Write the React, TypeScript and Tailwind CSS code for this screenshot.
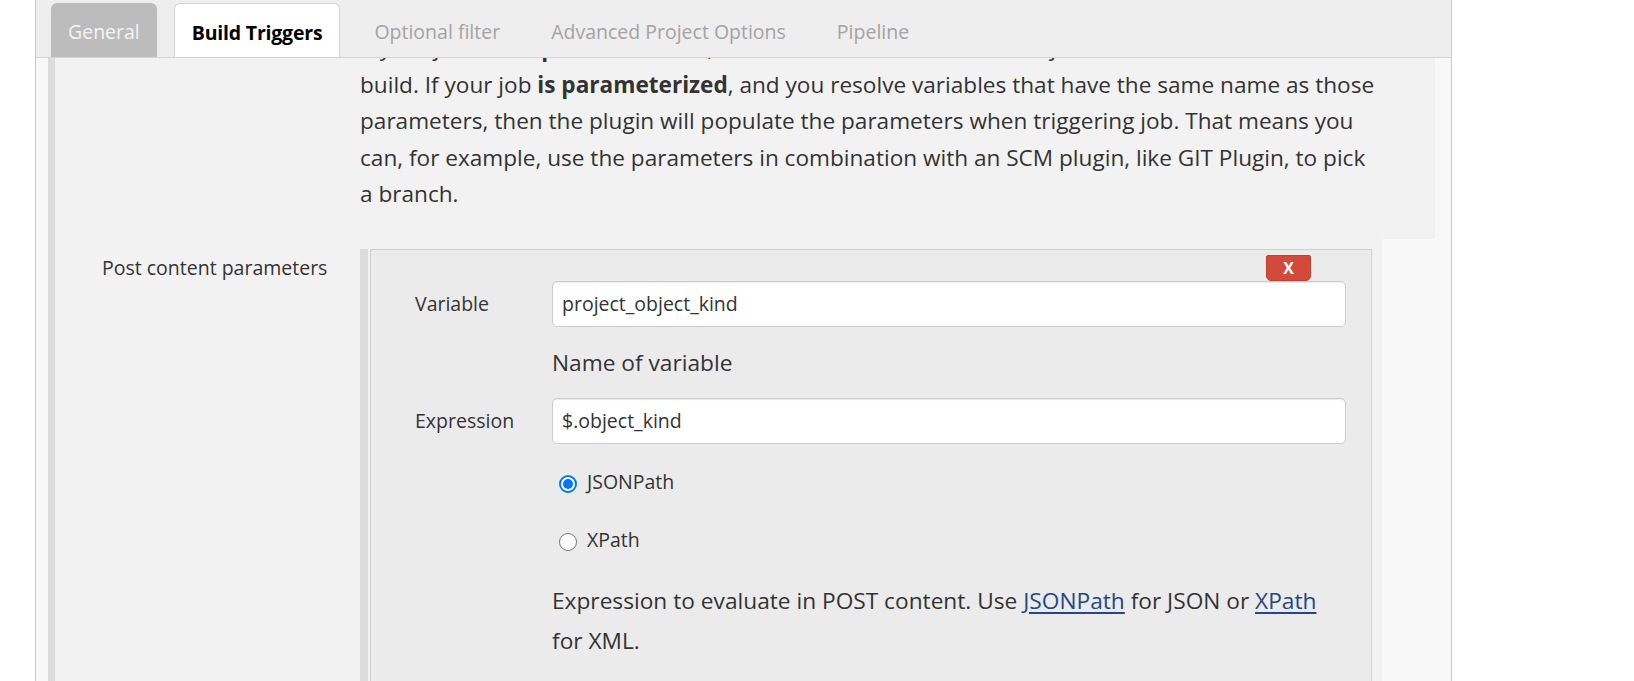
import React from 'react';

const tabs = [
  { name: 'General', state: 'done' },
  { name: 'Build Triggers', state: 'active' },
  { name: 'Optional filter', state: 'idle' },
  { name: 'Advanced Project Options', state: 'idle' },
  { name: 'Pipeline', state: 'idle' },
];

const TabBar: React.FC = () => (
  <div className="h-[58px] shrink-0 bg-[#eeeeee] border-b border-[#d3d3d3] flex items-end pl-[15px] gap-[17px]">
    {tabs.map((tab) => {
      if (tab.state === 'done') {
        return (
          <div
            key={tab.name}
            className="h-[54px] px-[17px] pt-[4px] flex items-center rounded-t-[6px] bg-[#bcbcbc] text-[#f4f4f4] text-[19.5px]"
          >
            {tab.name}
          </div>
        );
      }
      if (tab.state === 'active') {
        return (
          <div
            key={tab.name}
            className="h-[54px] px-[17px] pt-[4px] flex items-center rounded-t-[6px] bg-white border border-b-0 border-[#d3d3d3] text-black font-bold text-[19.5px] tracking-[-0.2px]"
          >
            {tab.name}
          </div>
        );
      }
      return (
        <div key={tab.name} className="h-[54px] px-[17px] pt-[4px] flex items-center text-[#a3a3a3] text-[19.5px]">
          {tab.name}
        </div>
      );
    })}
  </div>
);

const TextInput: React.FC<{ value: string }> = ({ value }) => (
  <input
    readOnly
    value={value}
    className="w-[794px] h-[46px] px-[9px] bg-white border border-[#cccccc] rounded-[5px] shadow-[inset_0_1px_1px_rgba(0,0,0,0.08)] text-[19.5px] text-[#333] outline-none font-['Open_Sans',sans-serif]"
  />
);

const Radio: React.FC<{ label: string; checked?: boolean }> = ({ label, checked }) => (
  <div className="h-[28px] flex items-center gap-[10px] ml-[7px] text-[19.5px]">
    {checked ? (
      <span className="w-[18px] h-[18px] mt-[4px] rounded-full border-2 border-[#0075ff] bg-white flex items-center justify-center">
        <span className="w-[10px] h-[10px] rounded-full bg-[#0075ff]" />
      </span>
    ) : (
      <span className="w-[18px] h-[18px] mt-[4px] rounded-full border border-[#767676] bg-white" />
    )}
    <span>{label}</span>
  </div>
);

export default function App() {
  return (
    <div className="h-[681px] overflow-hidden bg-white font-['Open_Sans',sans-serif] text-[#333]">
      <div className="ml-[35px] w-[1417px] h-full border-x border-[#c9c9c9] bg-[#f8f8f8] flex flex-col">
        <TabBar />

        <div className="flex flex-1 min-h-0 overflow-hidden">
          <div className="ml-[12px] w-[7px] shrink-0 bg-[#dcdcdc]" />

          <div className="flex-1 flex flex-col">
            {/* help text of the previous option, scrolled under the tabs */}
            <div className="w-[1380px] bg-[#f2f2f2] pl-[305px] pb-[26px] overflow-hidden">
              <p className="-mt-[28px] text-[22.6px] leading-[36.5px]">
                If your job <b>is not parameterized</b>, then the resolved variables will just be contributed to the
                <br />
                build. If your job <b>is parameterized</b>, and you resolve variables that have the same name as those
                <br />
                parameters, then the plugin will populate the parameters when triggering job. That means you
                <br />
                can, for example, use the parameters in combination with an SCM plugin, like GIT Plugin, to pick
                <br />
                a branch.
              </p>
            </div>

            {/* Post content parameters */}
            <div className="w-[1327px] flex-1 bg-[#f2f2f2] flex">
              <div className="w-[305px] shrink-0 pl-[47px] pt-[15px] text-[19.5px] leading-[28px]">
                Post content parameters
              </div>

              <div className="flex flex-1 mt-[10px]">
                <div className="w-[8px] shrink-0 bg-[#dcdcdc]" />
                <div className="ml-[2px] w-[1002px] bg-[#ebebeb] border border-b-0 border-[#d0d0d0]">
                  <div className="flex justify-end pr-[60px] pt-[5px]">
                    <button className="w-[45px] h-[26px] bg-[#d24a3b] border border-[#c33f31] rounded-t-[2px] rounded-b-[5px] text-white font-bold text-[16px] leading-none">
                      X
                    </button>
                  </div>

                  <div className="pl-[44px]">
                    <div className="flex items-center">
                      <div className="w-[137px] text-[19.5px]">Variable</div>
                      <TextInput value="project_object_kind" />
                    </div>
                    <div className="ml-[137px] mt-[22px] text-[22.7px] leading-[28px]">Name of variable</div>

                    <div className="flex items-center mt-[21px]">
                      <div className="w-[137px] text-[19.5px]">Expression</div>
                      <TextInput value="$.object_kind" />
                    </div>

                    <div className="ml-[137px] mt-[24px]">
                      <Radio label="JSONPath" checked />
                      <div className="mt-[30px]">
                        <Radio label="XPath" />
                      </div>
                    </div>

                    <p className="ml-[137px] mt-[27px] text-[22.7px] leading-[40px]">
                      Expression to evaluate in POST content. Use{' '}
                      <a href="#" className="text-[#24468a] underline underline-offset-[3px]">JSONPath</a> for JSON or{' '}
                      <a href="#" className="text-[#24468a] underline underline-offset-[3px]">XPath</a>
                      <br />
                      for XML.
                    </p>
                  </div>
                </div>
              </div>
            </div>
          </div>
        </div>
      </div>
    </div>
  );
}
